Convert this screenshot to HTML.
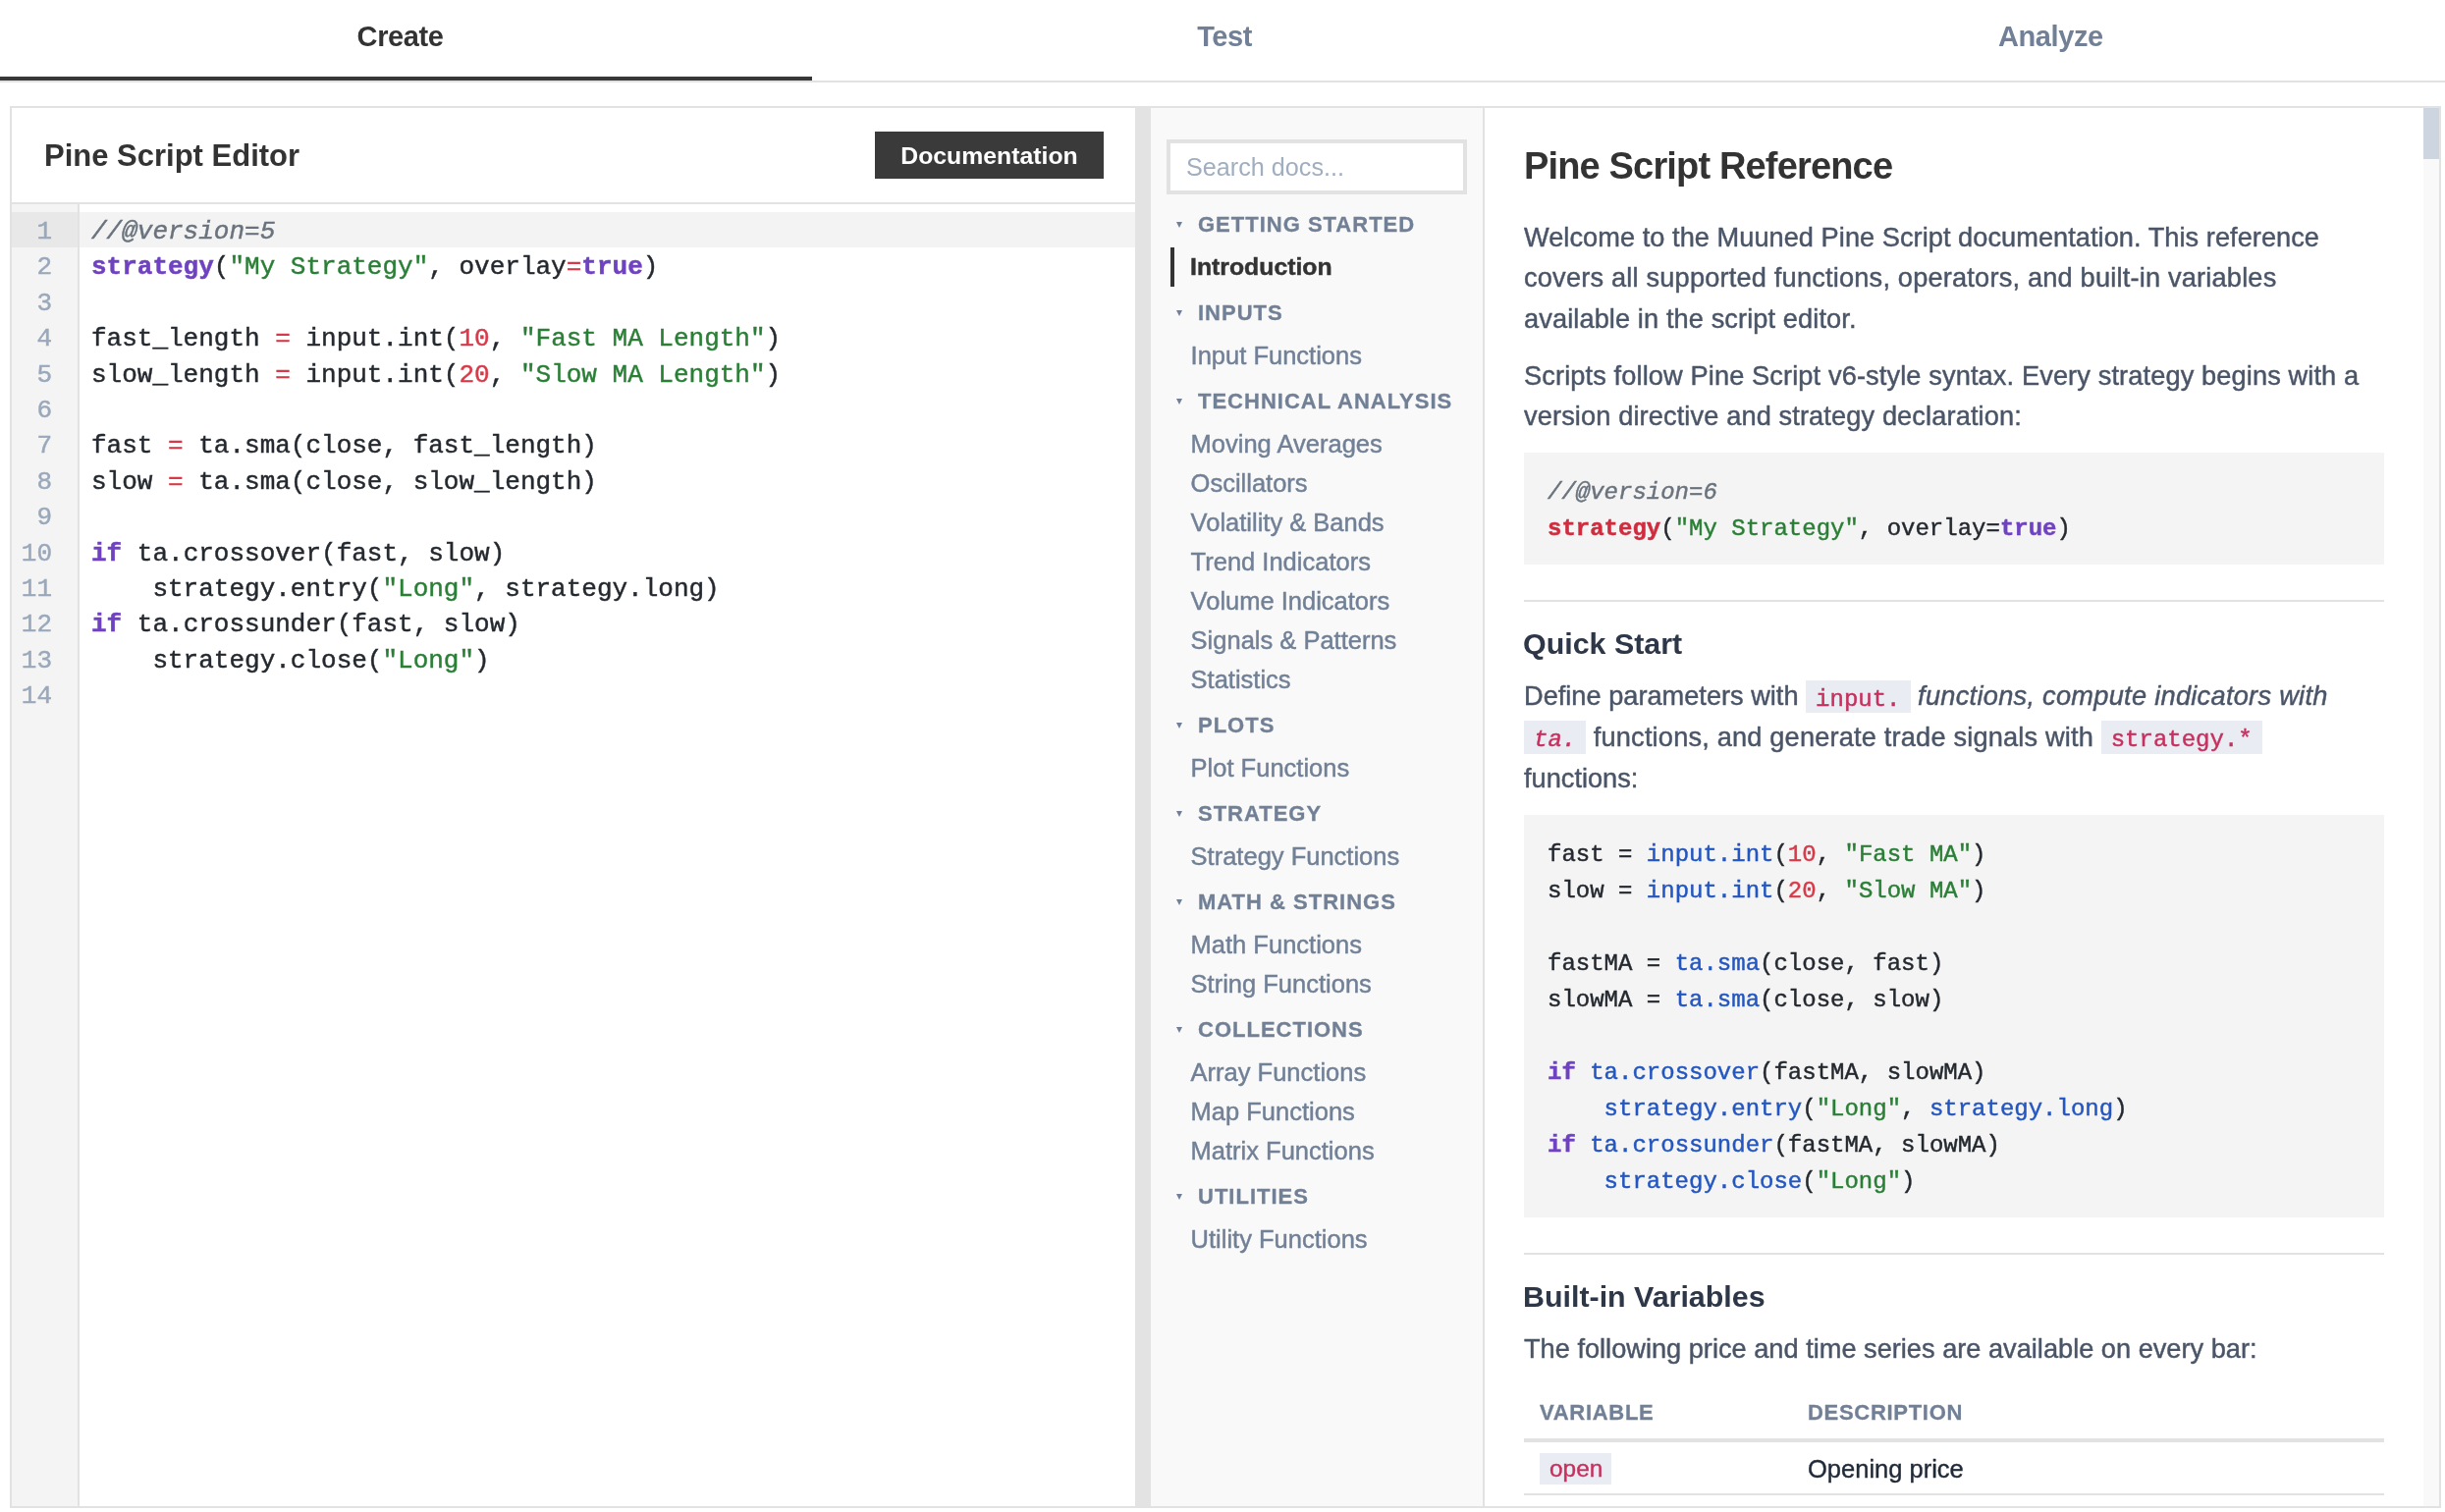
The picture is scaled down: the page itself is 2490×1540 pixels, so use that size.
<!DOCTYPE html>
<html>
<head>
<meta charset="utf-8">
<style>
html,body{margin:0;padding:0;background:#fff;overflow:hidden;}
body{width:2490px;height:1540px;}
#root{will-change:transform;zoom:2;width:1245px;height:770px;position:relative;overflow:hidden;font-family:"Liberation Sans",sans-serif;color:#333;}
#root div{box-sizing:border-box;}
.p,.ni,.ln,.cl{-webkit-text-stroke:0.22px currentColor;}
.nh,.th{-webkit-text-stroke:0.15px currentColor;}
@media (min-resolution: 2dppx){ body{width:1245px;height:770px;} #root{zoom:1;} }
.a{position:absolute;white-space:nowrap;}
.tab{position:absolute;font-weight:bold;font-size:14.5px;line-height:20px;color:#718096;white-space:nowrap;letter-spacing:-0.2px;}
.ln{font-family:"Liberation Mono",monospace;font-size:13px;line-height:18.2px;height:18.2px;white-space:pre;}
.cm{color:#6a737d;font-style:italic;}
.kw{color:#6f42c1;font-weight:bold;}
.st{color:#2a7f36;}
.op{color:#d73a49;}
.nm{color:#d73a49;}
.fn{color:#2356c1;}
.kr{color:#cf2c3f;font-weight:bold;}
.nh{position:absolute;font-size:11px;line-height:20px;font-weight:bold;color:#718096;letter-spacing:0.5px;white-space:nowrap;}
.tri{position:absolute;width:0;height:0;border-left:1.5px solid transparent;border-right:1.5px solid transparent;border-top:3px solid #718096;}
.ni{position:absolute;font-size:12.75px;line-height:20px;color:#718096;white-space:nowrap;}
.p{position:absolute;font-size:13.6px;line-height:20.8px;color:#4a5568;white-space:nowrap;}
.cb{position:absolute;background:#f4f4f4;}
.cl{position:absolute;font-family:"Liberation Mono",monospace;font-size:12px;line-height:18.45px;white-space:pre;color:#24292f;}
.hr{position:absolute;height:1px;background:#e2e2e2;}
.ic{font-family:"Liberation Mono",monospace;font-size:12px;color:#c7305e;background:#e9ecf2;padding:2.85px 5px 0.5px 5px;letter-spacing:0;}
</style>
</head>
<body>
<div id="root">
<div class="a" style="left:0;top:0;width:1245px;height:42px;border-bottom:1px solid #e2e2e2;"></div>
<div class="a" style="left:0;top:39px;width:413.4px;height:2px;background:#383838;"></div>
<div class="tab" style="left:181.8px;top:8.48px;color:#333;">Create</div>
<div class="tab" style="left:609.6px;top:8.48px;">Test</div>
<div class="tab" style="left:1017.5px;top:8.48px;">Analyze</div>
<div class="a" style="left:5px;top:54px;width:1238px;height:714px;border:1px solid #e2e2e2;"></div>
<div class="a" style="left:6px;top:103px;width:572px;height:1px;background:#e2e2e2;"></div>
<div class="a" style="left:22.5px;top:69.58px;font-size:15.5px;line-height:20px;font-weight:bold;color:#333;">Pine Script Editor</div>
<div class="a" style="left:445.5px;top:67px;width:116.5px;height:24px;background:#3a3a3a;"></div>
<div class="a" style="left:445.5px;width:116.5px;text-align:center;top:69.30px;font-size:12.4px;line-height:20px;font-weight:bold;color:#fff;">Documentation</div>
<div class="a" style="left:6px;top:104px;width:33.5px;height:663px;background:#f4f4f4;"></div>
<div class="a" style="left:39.5px;top:104px;width:1px;height:663px;background:#e2e2e2;"></div>
<div class="a" style="left:6px;top:108px;width:33.5px;height:18.2px;background:#e8e8e8;"></div>
<div class="a" style="left:40.5px;top:108px;width:537.5px;height:18.2px;background:#f3f3f3;"></div>
<div class="a" style="left:6px;top:109.0px;width:20.5px;color:#9aa8bb;"><div class="ln" style="text-align:right;">1</div><div class="ln" style="text-align:right;">2</div><div class="ln" style="text-align:right;">3</div><div class="ln" style="text-align:right;">4</div><div class="ln" style="text-align:right;">5</div><div class="ln" style="text-align:right;">6</div><div class="ln" style="text-align:right;">7</div><div class="ln" style="text-align:right;">8</div><div class="ln" style="text-align:right;">9</div><div class="ln" style="text-align:right;">10</div><div class="ln" style="text-align:right;">11</div><div class="ln" style="text-align:right;">12</div><div class="ln" style="text-align:right;">13</div><div class="ln" style="text-align:right;">14</div></div>
<div class="a" style="left:46.5px;top:109.0px;color:#24292f;"><div class="ln"><span class="cm">//@version=5</span></div><div class="ln"><span class="kw">strategy</span>(<span class="st">"My Strategy"</span>, overlay<span class="op">=</span><span class="kw">true</span>)</div><div class="ln"> </div><div class="ln">fast_length <span class="op">=</span> input.int(<span class="nm">10</span>, <span class="st">"Fast MA Length"</span>)</div><div class="ln">slow_length <span class="op">=</span> input.int(<span class="nm">20</span>, <span class="st">"Slow MA Length"</span>)</div><div class="ln"> </div><div class="ln">fast <span class="op">=</span> ta.sma(close, fast_length)</div><div class="ln">slow <span class="op">=</span> ta.sma(close, slow_length)</div><div class="ln"> </div><div class="ln"><span class="kw">if</span> ta.crossover(fast, slow)</div><div class="ln">    strategy.entry(<span class="st">"Long"</span>, strategy.long)</div><div class="ln"><span class="kw">if</span> ta.crossunder(fast, slow)</div><div class="ln">    strategy.close(<span class="st">"Long"</span>)</div><div class="ln"> </div></div>
<div class="a" style="left:578px;top:55px;width:8px;height:712px;background:#e3e3e3;"></div>
<div class="a" style="left:586px;top:55px;width:169px;height:712px;background:#f9f9f9;"></div>
<div class="a" style="left:755px;top:55px;width:1px;height:712px;background:#e2e2e2;"></div>
<div class="a" style="left:594px;top:71px;width:153px;height:28px;border:2px solid #e2e2e2;background:#fff;"></div>
<div class="a" style="left:604px;top:74.93px;font-size:12.6px;line-height:20px;color:#a0aec0;">Search docs...</div>
<div class="tri" style="left:598.95px;top:113.00px;"></div>
<div class="nh" style="left:610px;top:104.59px;">GETTING STARTED</div>
<div class="a" style="left:596px;top:126.00px;width:2px;height:20px;background:#333;"></div>
<div class="ni" style="left:606px;top:126.10px;font-size:12.4px;color:#333;font-weight:bold;">Introduction</div>
<div class="tri" style="left:598.95px;top:158.00px;"></div>
<div class="nh" style="left:610px;top:149.59px;">INPUTS</div>
<div class="ni" style="left:606.3px;top:170.98px;">Input Functions</div>
<div class="tri" style="left:598.95px;top:203.00px;"></div>
<div class="nh" style="left:610px;top:194.59px;">TECHNICAL ANALYSIS</div>
<div class="ni" style="left:606.3px;top:215.98px;">Moving Averages</div>
<div class="ni" style="left:606.3px;top:235.98px;">Oscillators</div>
<div class="ni" style="left:606.3px;top:255.98px;">Volatility &amp; Bands</div>
<div class="ni" style="left:606.3px;top:275.98px;">Trend Indicators</div>
<div class="ni" style="left:606.3px;top:295.98px;">Volume Indicators</div>
<div class="ni" style="left:606.3px;top:315.98px;">Signals &amp; Patterns</div>
<div class="ni" style="left:606.3px;top:335.98px;">Statistics</div>
<div class="tri" style="left:598.95px;top:368.00px;"></div>
<div class="nh" style="left:610px;top:359.59px;">PLOTS</div>
<div class="ni" style="left:606.3px;top:380.98px;">Plot Functions</div>
<div class="tri" style="left:598.95px;top:413.00px;"></div>
<div class="nh" style="left:610px;top:404.59px;">STRATEGY</div>
<div class="ni" style="left:606.3px;top:425.98px;">Strategy Functions</div>
<div class="tri" style="left:598.95px;top:458.00px;"></div>
<div class="nh" style="left:610px;top:449.59px;">MATH &amp; STRINGS</div>
<div class="ni" style="left:606.3px;top:470.98px;">Math Functions</div>
<div class="ni" style="left:606.3px;top:490.98px;">String Functions</div>
<div class="tri" style="left:598.95px;top:523.00px;"></div>
<div class="nh" style="left:610px;top:514.59px;">COLLECTIONS</div>
<div class="ni" style="left:606.3px;top:535.98px;">Array Functions</div>
<div class="ni" style="left:606.3px;top:555.98px;">Map Functions</div>
<div class="ni" style="left:606.3px;top:575.98px;">Matrix Functions</div>
<div class="tri" style="left:598.95px;top:608.00px;"></div>
<div class="nh" style="left:610px;top:599.59px;">UTILITIES</div>
<div class="ni" style="left:606.3px;top:620.98px;">Utility Functions</div>
<div class="a" style="left:1234px;top:55px;width:8px;height:712px;background:#f9f9f9;"></div>
<div class="a" style="left:1234px;top:55px;width:8px;height:26px;background:#cdd5e0;"></div>
<div class="a" style="left:776px;top:72.42px;font-size:19px;line-height:24px;font-weight:bold;color:#333;letter-spacing:-0.42px;">Pine Script Reference</div>
<div class="p" style="left:776px;top:110.29px;font-size:13.6px;letter-spacing:0.02px;">Welcome to the Muuned Pine Script documentation. This reference</div>
<div class="p" style="left:776px;top:131.09px;font-size:13.6px;letter-spacing:0.095px;">covers all supported functions, operators, and built-in variables</div>
<div class="p" style="left:776px;top:151.89px;font-size:13.6px;letter-spacing:0.05px;">available in the script editor.</div>
<div class="p" style="left:776px;top:180.79px;font-size:13.6px;letter-spacing:0.06px;">Scripts follow Pine Script v6-style syntax. Every strategy begins with a</div>
<div class="p" style="left:776px;top:201.59px;font-size:13.6px;letter-spacing:0.06px;">version directive and strategy declaration:</div>
<div class="cb" style="left:776px;top:230.6px;width:438px;height:56.7px;"></div>
<div class="cl" style="left:788px;top:241.98px;"><span class="cm">//@version=6</span></div>
<div class="cl" style="left:788px;top:260.43px;"><span class="kr">strategy</span>(<span class="st">"My Strategy"</span>, overlay=<span class="kw">true</span>)</div>
<div class="hr" style="left:776px;top:305.5px;width:438px;"></div>
<div class="a" style="left:775.5px;top:317.48px;font-size:15.2px;line-height:20px;font-weight:bold;color:#2d3748;">Quick Start</div>
<div class="p" style="left:776px;top:344.19px;font-size:13.6px;letter-spacing:0px;">Define parameters with <span class="ic">input.</span> <i style="letter-spacing:0.14px">functions, compute indicators with</i></div>
<div class="p" style="left:776px;top:364.99px;font-size:13.6px;letter-spacing:0px;"><i><span class="ic">ta.</span></i> <span style="letter-spacing:0.09px">functions, and generate trade signals with</span> <span class="ic">strategy.*</span></div>
<div class="p" style="left:776px;top:385.79px;font-size:13.6px;letter-spacing:0px;">functions:</div>
<div class="cb" style="left:776px;top:414.9px;width:438px;height:204.9px;"></div>
<div class="cl" style="left:788px;top:426.43px;">fast = <span class="fn">input.int</span>(<span class="nm">10</span>, <span class="st">"Fast MA"</span>)</div>
<div class="cl" style="left:788px;top:444.91px;">slow = <span class="fn">input.int</span>(<span class="nm">20</span>, <span class="st">"Slow MA"</span>)</div>
<div class="cl" style="left:788px;top:481.87px;">fastMA = <span class="fn">ta.sma</span>(close, fast)</div>
<div class="cl" style="left:788px;top:500.35px;">slowMA = <span class="fn">ta.sma</span>(close, slow)</div>
<div class="cl" style="left:788px;top:537.31px;"><span class="kw">if</span> <span class="fn">ta.crossover</span>(fastMA, slowMA)</div>
<div class="cl" style="left:788px;top:555.79px;">    <span class="fn">strategy.entry</span>(<span class="st">"Long"</span>, <span class="fn">strategy.long</span>)</div>
<div class="cl" style="left:788px;top:574.27px;"><span class="kw">if</span> <span class="fn">ta.crossunder</span>(fastMA, slowMA)</div>
<div class="cl" style="left:788px;top:592.75px;">    <span class="fn">strategy.close</span>(<span class="st">"Long"</span>)</div>
<div class="hr" style="left:776px;top:638px;width:438px;"></div>
<div class="a" style="left:775.5px;top:650.23px;font-size:15.2px;line-height:20px;font-weight:bold;color:#2d3748;">Built-in Variables</div>
<div class="p" style="left:776px;top:676.64px;font-size:13.6px;letter-spacing:0px;">The following price and time series are available on every bar:</div>
<div class="a th" style="left:784px;top:709.29px;font-size:11px;line-height:20px;font-weight:bold;color:#718096;letter-spacing:0.35px;">VARIABLE</div>
<div class="a th" style="left:920.5px;top:709.29px;font-size:11px;line-height:20px;font-weight:bold;color:#718096;letter-spacing:0.35px;">DESCRIPTION</div>
<div class="a" style="left:776px;top:732.5px;width:438px;height:2px;background:#e2e2e2;"></div>
<div class="a" style="left:784px;top:740px;width:36.5px;height:16px;background:#e9ecf2;"></div>
<div class="a" style="left:789px;top:737.83px;font-size:12.2px;line-height:20px;color:#c7305e;-webkit-text-stroke:0.2px currentColor;">open</div>
<div class="a" style="left:920.5px;top:737.83px;font-size:12.75px;line-height:20px;color:#1f2937;-webkit-text-stroke:0.2px currentColor;">Opening price</div>
<div class="a" style="left:776px;top:760.5px;width:438px;height:1px;background:#e2e2e2;"></div>
</div>
</body>
</html>
